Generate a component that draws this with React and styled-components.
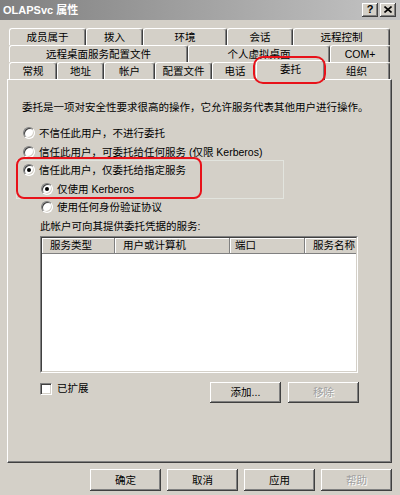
import React from "react";
import styled, { createGlobalStyle } from "styled-components";

const Global = createGlobalStyle`
  html, body { margin: 0; padding: 0; background: #d4d0c8; }
  body {
    font-family: "Liberation Sans", "Noto Sans CJK SC", sans-serif;
    font-size: 10.5px;
    color: #000;
  }
`;

const Window = styled.div`
  position: relative;
  width: 400px;
  height: 495px;
  background: #d4d0c8;
  display: flex;
  flex-direction: column;
  overflow: hidden;
`;

const TitleBar = styled.div`
  flex: none;
  height: 20px;
  display: flex;
  align-items: center;
  padding: 0 4px 0 3px;
  background: linear-gradient(to right, #808080, #c4c4c4);
`;

const Title = styled.div`
  flex: 1;
  color: #fff;
  font-weight: bold;
  font-size: 11px;
  line-height: 1;
  white-space: nowrap;
`;

const CapButtons = styled.div`
  display: flex;
  gap: 2px;
`;

const CapButton = styled.div`
  width: 16px;
  height: 14px;
  box-sizing: border-box;
  background: #d4d0c8;
  box-shadow: inset -1px -1px #404040, inset 1px 1px #fff, inset -2px -2px #808080;
  display: flex;
  align-items: center;
  justify-content: center;
  font: bold 11px "Liberation Sans", sans-serif;
  line-height: 1;
  padding-bottom: 1px;
`;

const Body = styled.div`
  flex: 1;
  display: flex;
  flex-direction: column;
  padding: 8px 8px 0 7px;
`;

const TabStrip = styled.div`
  display: flex;
  flex-direction: column;
  margin: 0 2px;
`;

const TabRow = styled.div`
  display: flex;
  height: 17px;
`;

const Tab = styled.div`
  flex: none;
  box-sizing: border-box;
  width: ${(p) => (p.$active ? p.$w + 4 : p.$w)}px;
  height: ${(p) => (p.$active ? 20 : 17)}px;
  margin: ${(p) => (p.$active ? "-2px -2px -1px -2px" : "0")};
  position: ${(p) => (p.$active ? "relative" : "static")};
  z-index: ${(p) => (p.$active ? 2 : "auto")};
  background: #d4d0c8;
  border-top: 1px solid #fff;
  border-left: 1px solid #fff;
  border-right: 1px solid #404040;
  border-radius: 3px 3px 0 0;
  box-shadow: inset -1px 0 #808080;
  display: flex;
  align-items: center;
  justify-content: center;
  line-height: 1;
  white-space: nowrap;
  padding-bottom: ${(p) => (p.$active ? 2 : 0)}px;
`;

const Panel = styled.div`
  flex: none;
  height: 384px;
  box-sizing: border-box;
  border-top: 1px solid #fff;
  border-left: 1px solid #fff;
  border-right: 1px solid #404040;
  border-bottom: 1px solid #404040;
  box-shadow: inset -1px -1px #808080;
  padding: 20px 0 0 14px;
  display: flex;
  flex-direction: column;
`;

const Desc = styled.div`
  line-height: 14px;
  white-space: nowrap;
`;

const Options = styled.div`
  margin-top: 10px;
  padding-left: 1px;
  display: flex;
  flex-direction: column;
`;

const FocusGroup = styled.div`
  display: flex;
  flex-direction: column;
  margin-left: -6px;
  padding-left: 6px;
  width: 260px;
  outline: 1px solid #e2e4de;
`;

const RadioRow = styled.div`
  height: 18.5px;
  display: flex;
  align-items: center;
  gap: 4px;
  padding-left: ${(p) => (p.$indent ? 18 : 0)}px;
  white-space: nowrap;
  line-height: 1;
`;

const RadioDot = styled.span`
  flex: none;
  position: relative;
  width: 12px;
  height: 12px;
  box-sizing: border-box;
  border-radius: 50%;
  background: #fff;
  border: 1px solid;
  border-color: #808080 #fff #fff #808080;
  box-shadow: inset 1px 1px #404040, inset -1px -1px #d4d0c8;
  &::after {
    content: "";
    display: ${(p) => (p.$checked ? "block" : "none")};
    position: absolute;
    left: 50%;
    top: 50%;
    width: 4px;
    height: 4px;
    margin: -2px 0 0 -2px;
    border-radius: 50%;
    background: #000;
  }
`;

const Services = styled.div`
  margin-left: 17px;
  width: 319px;
  display: flex;
  flex-direction: column;
`;

const Label = styled.div`
  margin-top: 2px;
  line-height: 14px;
  white-space: nowrap;
`;

const ListBox = styled.div`
  margin-top: 3px;
  width: 318px;
  height: 137px;
  box-sizing: border-box;
  border: 1px solid;
  border-color: #808080 #fff #fff #808080;
  background: #fff;
`;

const ListInner = styled.div`
  height: 100%;
  box-sizing: border-box;
  border: 1px solid;
  border-color: #404040 #d4d0c8 #d4d0c8 #404040;
  overflow: hidden;
`;

const Header = styled.div`
  display: flex;
  height: 16px;
`;

const HeaderCell = styled.div`
  flex: none;
  width: ${(p) => p.$w}px;
  box-sizing: border-box;
  background: #d4d0c8;
  box-shadow: inset -1px -1px #808080, inset 1px 1px #fff;
  padding-left: ${(p) => p.$pad}px;
  display: flex;
  align-items: center;
  line-height: 1;
  white-space: nowrap;
  overflow: hidden;
`;

const ActionRow = styled.div`
  margin-top: 9px;
  display: flex;
  align-items: flex-start;
`;

const CheckLabel = styled.label`
  margin-top: 1px;
  display: flex;
  align-items: center;
  gap: 5px;
  line-height: 1;
`;

const CheckBox = styled.span`
  flex: none;
  width: 12px;
  height: 12px;
  box-sizing: border-box;
  background: #fff;
  border: 1px solid;
  border-color: #808080 #fff #fff #808080;
  box-shadow: inset 1px 1px #404040, inset -1px -1px #d4d0c8;
`;

const ButtonGroup = styled.div`
  margin-left: auto;
  display: flex;
  gap: ${(p) => p.$gap}px;
`;

const Button = styled.button`
  width: 71px;
  height: ${(p) => p.$h}px;
  box-sizing: border-box;
  margin: 0;
  padding: 0;
  border: none;
  background: #d4d0c8;
  box-shadow: inset -1px -1px #404040, inset 1px 1px #fff, inset -2px -2px #808080;
  font-family: "Liberation Sans", "Noto Sans CJK SC", sans-serif;
  font-size: 10.5px;
  line-height: 1;
  color: ${(p) => (p.disabled ? "#a0a0a0" : "#000")};
  text-shadow: ${(p) => (p.disabled ? "1px 1px #fff" : "none")};
`;

const Footer = styled.div`
  margin-top: 6px;
  display: flex;
  justify-content: flex-end;
  gap: 6px;
`;

const Highlight = styled.div`
  position: absolute;
  left: ${(p) => p.$x}px;
  top: ${(p) => p.$y}px;
  width: ${(p) => p.$w}px;
  height: ${(p) => p.$h}px;
  box-sizing: border-box;
  border: 2px solid #e8121a;
  border-radius: ${(p) => p.$r}px;
  pointer-events: none;
  z-index: 5;
`;

const rows = [
  [
    ["成员属于", 77],
    ["拨入", 57],
    ["环境", 84],
    ["会话", 66],
    ["远程控制", 97],
  ],
  [
    ["远程桌面服务配置文件", 179],
    ["个人虚拟桌面", 142],
    ["COM+", 60],
  ],
  [
    ["常规", 48],
    ["地址", 47],
    ["帐户", 51],
    ["配置文件", 57],
    ["电话", 46],
    ["委托", 65, true],
    ["组织", 67],
  ],
];

const columns = [
  ["服务类型", 73, 8],
  ["用户或计算机", 115, 8],
  ["端口", 75, 5],
  ["服务名称", 75, 8],
];

export default function App() {
  return (
    <>
      <Global />
      <Window>
        <TitleBar>
          <Title>OLAPSvc 属性</Title>
          <CapButtons>
            <CapButton>?</CapButton>
            <CapButton>
              <svg width="8" height="7" viewBox="0 0 8 7">
                <path d="M0.5 0.5 L7.5 6.5 M7.5 0.5 L0.5 6.5" stroke="#000" strokeWidth="1.6" />
              </svg>
            </CapButton>
          </CapButtons>
        </TitleBar>
        <Body>
          <TabStrip>
            {rows.map((row, i) => (
              <TabRow key={i}>
                {row.map(([label, w, active]) => (
                  <Tab key={label} $w={w} $active={active}>
                    {label}
                  </Tab>
                ))}
              </TabRow>
            ))}
          </TabStrip>
          <Panel>
            <Desc>委托是一项对安全性要求很高的操作，它允许服务代表其他用户进行操作。</Desc>
            <Options>
              <RadioRow>
                <RadioDot />
                不信任此用户，不进行委托
              </RadioRow>
              <RadioRow>
                <RadioDot />
                信任此用户，可委托给任何服务 (仅限 Kerberos)
              </RadioRow>
              <FocusGroup>
                <RadioRow>
                  <RadioDot $checked />
                  信任此用户，仅委托给指定服务
                </RadioRow>
                <RadioRow $indent>
                  <RadioDot $checked />
                  仅使用 Kerberos
                </RadioRow>
              </FocusGroup>
              <RadioRow $indent>
                <RadioDot />
                使用任何身份验证协议
              </RadioRow>
              <Services>
                <Label>此帐户可向其提供委托凭据的服务:</Label>
                <ListBox>
                  <ListInner>
                    <Header>
                      {columns.map(([c, w, pad]) => (
                        <HeaderCell key={c} $w={w} $pad={pad}>
                          {c}
                        </HeaderCell>
                      ))}
                    </Header>
                  </ListInner>
                </ListBox>
                <ActionRow>
                  <CheckLabel>
                    <CheckBox />
                    已扩展
                  </CheckLabel>
                  <ButtonGroup $gap={7}>
                    <Button $h={21}>添加...</Button>
                    <Button $h={21} disabled>
                      移除
                    </Button>
                  </ButtonGroup>
                </ActionRow>
              </Services>
            </Options>
          </Panel>
          <Footer>
            <Button $h={22}>确定</Button>
            <Button $h={22}>取消</Button>
            <Button $h={22}>应用</Button>
            <Button $h={22} disabled>
              帮助
            </Button>
          </Footer>
        </Body>
        <Highlight $x={253} $y={56} $w={73} $h={28} $r={10} />
        <Highlight $x={16} $y={157} $w={186} $h={42} $r={8} />
      </Window>
    </>
  );
}
